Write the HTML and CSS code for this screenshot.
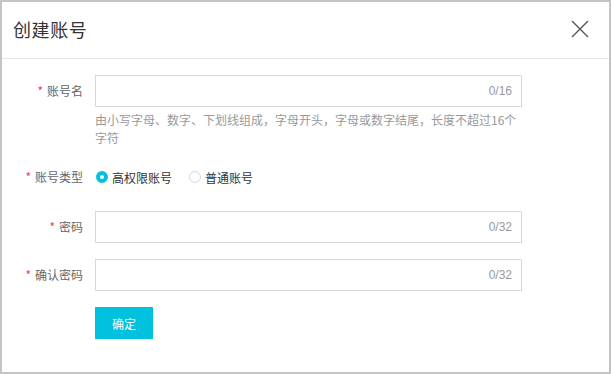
FILE: index.html
```html
<!DOCTYPE html>
<html lang="zh-CN">
<head>
  <meta charset="UTF-8">
  <title>创建账号</title>
  <link rel="stylesheet" href="styles.css">
</head>
<body>
  <div class="dialog">
    <div class="dialog-header">
      <h2 class="dialog-title">创建账号</h2>
      <button class="dialog-close" aria-label="关闭">
        <svg width="18" height="18" viewBox="0 0 18 18">
          <path d="M1 1 L17 17 M17 1 L1 17" stroke="#555" stroke-width="1.4" fill="none"/>
        </svg>
      </button>
    </div>
    <form class="form">
      <div class="form-row">
        <label class="form-label"><span class="req">*</span>账号名</label>
        <div class="form-field">
          <div class="input-box">
            <input type="text" class="input">
            <span class="counter">0/16</span>
          </div>
          <p class="hint">由小写字母、数字、下划线组成，字母开头，字母或数字结尾，长度不超过16个字符</p>
        </div>
      </div>
      <div class="form-row row-radio">
        <label class="form-label"><span class="req">*</span>账号类型</label>
        <div class="form-field radios">
          <label class="radio"><span class="radio-dot checked"></span>高权限账号</label>
          <label class="radio"><span class="radio-dot"></span>普通账号</label>
        </div>
      </div>
      <div class="form-row">
        <label class="form-label"><span class="req">*</span>密码</label>
        <div class="form-field">
          <div class="input-box">
            <input type="password" class="input">
            <span class="counter">0/32</span>
          </div>
        </div>
      </div>
      <div class="form-row">
        <label class="form-label"><span class="req">*</span>确认密码</label>
        <div class="form-field">
          <div class="input-box">
            <input type="password" class="input">
            <span class="counter">0/32</span>
          </div>
        </div>
      </div>
      <div class="form-row">
        <span class="form-label"></span>
        <div class="form-field">
          <button type="button" class="submit-btn">确定</button>
        </div>
      </div>
    </form>
  </div>
</body>
</html>
```

FILE: styles.css
```css
html, body {
  margin: 0;
  padding: 0;
  background: #FFFFFF;
}
body {
  font-family: "Noto Sans CJK SC", "Liberation Sans", sans-serif;
  font-size: 12px;
  color: #333333;
}
.dialog {
  box-sizing: border-box;
  width: 611px;
  height: 374px;
  border: 2px solid #C4C4C4;
  background: #FFFFFF;
}
.dialog-header {
  height: 56px;
  border-bottom: 1px solid #E8E8E8;
  display: flex;
  align-items: center;
  justify-content: space-between;
  padding: 0 20px 0 11px;
}
.dialog-title {
  margin: 0;
  margin-top: -3px;
  font-size: 18px;
  font-weight: 400;
  letter-spacing: 0.6px;
  color: #333333;
}
.dialog-close {
  border: none;
  background: none;
  padding: 0;
  margin-top: -2px;
  width: 18px;
  height: 18px;
  cursor: pointer;
  display: flex;
}
.form {
  padding-top: 16px;
  display: flex;
  flex-direction: column;
  gap: 16px;
}
.form-row {
  display: grid;
  grid-template-columns: 81px 427px;
  column-gap: 12px;
}
.row-radio {
  margin: -2px 0 2px 0;
}
.form-label {
  text-align: right;
  line-height: 32px;
  color: #666666;
}
.req {
  color: #F33B3B;
  margin-right: 4px;
}
.input-box {
  box-sizing: border-box;
  height: 32px;
  border: 1px solid #D7D8D9;
  display: flex;
  align-items: center;
  padding-right: 9px;
}
.input {
  flex: 1;
  border: none;
  outline: none;
  height: 100%;
  padding: 0 10px;
  background: transparent;
}
.counter {
  font-family: "Liberation Sans", Arial, sans-serif;
  color: #999999;
}
.hint {
  margin: 4px 0 0 0;
  line-height: 18px;
  color: #999999;
}
.radios {
  display: flex;
  align-items: center;
  height: 32px;
  gap: 16px;
}
.radio {
  display: flex;
  align-items: center;
  gap: 4px;
  color: #333333;
}
.radio-dot {
  box-sizing: border-box;
  width: 12px;
  height: 12px;
  border-radius: 50%;
  border: 1px solid #D7D8D9;
  background: #FFFFFF;
  margin-left: 1px;
}
.radio-dot.checked {
  border: 4px solid #00C1DE;
}
.submit-btn {
  width: 58px;
  height: 32px;
  border: none;
  background: #00C1DE;
  color: #FFFFFF;
  font-family: "Noto Sans CJK SC", sans-serif;
  font-size: 12px;
  padding: 0;
  cursor: pointer;
}
```
